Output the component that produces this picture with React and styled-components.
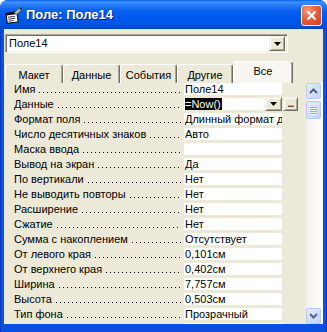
import styled, { createGlobalStyle } from "styled-components";

const GlobalStyle = createGlobalStyle`
  body {
    margin: 0;
    background: #ffffff;
    font-family: "Liberation Sans", Arial, sans-serif;
  }
`;

const Window = styled.div`
  width: 327px;
  height: 332px;
  box-sizing: border-box;
  display: flex;
  flex-direction: column;
  background: linear-gradient(to right, #0019a8 0, #0855dd 1px, #0a4fe0 3px, #0a4fe0 323px, #0855dd 326px, #0019a8 327px);
  border-radius: 8px 8px 0 0;
  overflow: hidden;
`;

const TitleBar = styled.div`
  height: 29px;
  flex-shrink: 0;
  display: flex;
  align-items: center;
  padding: 0 5px 0 5px;
  background: linear-gradient(
    to bottom,
    #0a5ded 0,
    #3d93ff 2px,
    #2a7cf8 5px,
    #0c63f0 10px,
    #0058ee 16px,
    #0055e5 24px,
    #0047cf 28px,
    #003dc0 29px
  );
  color: #fff;
`;

const TitleIcon = styled.svg`
  width: 17px;
  height: 17px;
  margin-top: 1px;
  flex-shrink: 0;
`;

const TitleText = styled.div`
  margin-left: 4px;
  font-size: 13px;
  font-weight: bold;
  text-shadow: 1px 1px 0 #0a1e8c;
  flex: 1;
`;

const CloseButton = styled.div`
  width: 21px;
  height: 21px;
  box-sizing: border-box;
  border: 1px solid #fff;
  border-radius: 3px;
  background: radial-gradient(circle at 30% 25%, #f49b7f 0, #e5603d 45%, #cf3a17 100%);
  display: flex;
  align-items: center;
  justify-content: center;
  margin-top: 2px;
`;

const Client = styled.div`
  flex: 1;
  margin: 0 4px 8px 4px;
  background: #ece9d8;
  display: flex;
  flex-direction: column;
  padding: 5px 0 0 1px;
  overflow: hidden;
  font-size: 11px;
  color: #000;
`;

const Combo = styled.div`
  width: 283px;
  height: 19px;
  box-sizing: border-box;
  display: flex;
  align-items: center;
  background: #fff;
  border: 1px solid;
  border-color: #aca899 #ffffff #ffffff #aca899;
  box-shadow: inset 1px 1px 0 #716f64, inset -1px -1px 0 #f1efe2;
  padding: 0 2px 0 3px;
`;

const ComboText = styled.div`
  flex: 1;
  line-height: 15px;
`;

const ClassicButton = styled.div`
  width: ${(p) => p.$w || 16}px;
  height: ${(p) => p.$h || 15}px;
  margin-left: ${(p) => p.$gap || 0}px;
  box-sizing: border-box;
  background: #ece9d8;
  border: 1px solid;
  border-color: #f1efe2 #716f64 #716f64 #f1efe2;
  box-shadow: inset 1px 1px 0 #ffffff, inset -1px -1px 0 #aca899;
  display: flex;
  align-items: center;
  justify-content: center;
  flex-shrink: 0;
`;

const Ellipsis = styled.span`
  font-weight: bold;
  font-size: 9px;
  line-height: 6px;
  letter-spacing: -0.5px;
`;

const TabRow = styled.div`
  display: flex;
  align-items: flex-end;
  height: 22px;
  margin-top: 8px;
  flex-shrink: 0;
`;

const Tab = styled.div`
  width: ${(p) => p.$w}px;
  height: ${(p) => (p.$active ? 22 : 19)}px;
  box-sizing: border-box;
  background: ${(p) => (p.$active ? "#f7f6f1" : "#ece9d8")};
  border-top: 1px solid #fff;
  border-left: 1px solid #fff;
  border-right: 1px solid #716f64;
  box-shadow: inset -1px 0 0 #aca899;
  border-radius: 3px 3px 0 0;
  display: flex;
  justify-content: center;
  padding-top: ${(p) => (p.$active ? 3 : 4)}px;
`;

const Sheet = styled.div`
  flex: 1;
  display: flex;
  overflow: hidden;
`;

const List = styled.div`
  width: 298px;
  display: flex;
  flex-direction: column;
  overflow: hidden;
`;

const Row = styled.div`
  height: 15px;
  flex-shrink: 0;
  display: flex;
  align-items: flex-start;
`;

const Label = styled.div`
  width: 169px;
  margin-left: 9px;
  height: 12px;
  line-height: 12px;
  display: flex;
  white-space: nowrap;
`;

const Leader = styled.span`
  flex: 1;
  margin: 0 2px 0 4px;
  background-image: linear-gradient(to right, #000 1px, transparent 1px);
  background-size: 4px 1px;
  background-repeat: repeat-x;
  background-position: 0 9px;
`;

const Value = styled.div`
  width: ${(p) => p.$w || 98}px;
  height: 12px;
  line-height: 12px;
  margin: ${(p) => p.$top || 0}px 0 0 1px;
  padding-left: 1px;
  box-sizing: border-box;
  background: #fff;
  white-space: nowrap;
  overflow: hidden;
`;

const Selected = styled.span`
  background: #000;
  color: #fff;
  padding-right: 1px;
`;

const Editor = styled.div`
  display: flex;
  align-items: flex-start;
  margin-top: -1px;
`;

const Scrollbar = styled.div`
  width: 17px;
  margin-left: 5px;
  display: flex;
  flex-direction: column;
  background: linear-gradient(to right, #f3f1ec, #fefefb);
`;

const ScrollButton = styled.div`
  width: 15px;
  height: 16px;
  box-sizing: border-box;
  border: 1px solid #b7caf5;
  border-radius: 2px;
  background: linear-gradient(to bottom right, #e6eefc, #c2d3fc);
  display: flex;
  align-items: center;
  justify-content: center;
  flex-shrink: 0;
`;

const Thumb = styled(ScrollButton)`
  height: 18px;
  margin-top: 2px;
  flex-direction: column;
  gap: 1px;
`;

const Grip = styled.div`
  width: 7px;
  height: 1px;
  background: #8caaf0;
  box-shadow: 0 1px 0 #eef4fe;
`;

const Track = styled.div`
  flex: 1;
`;

const props = [
  ["Имя", "Поле14"],
  ["Данные", "=Now()", true],
  ["Формат поля", "Длинный формат даты"],
  ["Число десятичных знаков", "Авто"],
  ["Маска ввода", ""],
  ["Вывод на экран", "Да"],
  ["По вертикали", "Нет"],
  ["Не выводить повторы", "Нет"],
  ["Расширение", "Нет"],
  ["Сжатие", "Нет"],
  ["Сумма с накоплением", "Отсутствует"],
  ["От левого края", "0,101см"],
  ["От верхнего края", "0,402см"],
  ["Ширина", "7,757см"],
  ["Высота", "0,503см"],
  ["Тип фона", "Прозрачный"],
  ["Цвет фона", "16777215"],
];

const tabs = [
  ["Макет", 58],
  ["Данные", 57],
  ["События", 57],
  ["Другие", 56],
  ["Все", 60, true],
];

const DownTriangle = () => (
  <svg width="7" height="4" viewBox="0 0 7 4">
    <path d="M0 0h7L3.5 4z" fill="#000" />
  </svg>
);

const Chevron = ({ up }) => (
  <svg width="9" height="6" viewBox="0 0 9 6">
    <path
      d={up ? "M1 5L4.5 1.5L8 5" : "M1 1L4.5 4.5L8 1"}
      stroke="#4d6185"
      strokeWidth="2"
      fill="none"
    />
  </svg>
);

const App = () => {
  return (
    <>
      <GlobalStyle />
      <Window>
        <TitleBar>
          <TitleIcon viewBox="0 0 17 17">
            <g transform="rotate(-8 8 10)">
              <rect x="1.5" y="5.5" width="11" height="10" fill="#fff" stroke="#000" />
              <rect x="1.5" y="5.5" width="11" height="2" fill="#000" />
              <path d="M3 9.5h7M3 11.5h7M3 13.5h5" stroke="#404040" />
            </g>
            <path d="M9 6L14 1.5L16 3.5L11.5 7.5Z" fill="#c0c0c0" stroke="#505050" strokeWidth="0.8" />
            <path d="M14.5 1L16.5 0.5L16.5 3Z" fill="#202020" />
          </TitleIcon>
          <TitleText>Поле: Поле14</TitleText>
          <CloseButton>
            <svg width="11" height="11" viewBox="0 0 11 11">
              <path d="M1.5 1.5L9.5 9.5M9.5 1.5L1.5 9.5" stroke="#fff" strokeWidth="2" />
            </svg>
          </CloseButton>
        </TitleBar>
        <Client>
          <Combo>
            <ComboText>Поле14</ComboText>
            <ClassicButton $w={16} $h={15}>
              <DownTriangle />
            </ClassicButton>
          </Combo>
          <TabRow>
            {tabs.map(([name, w, active]) => (
              <Tab key={name} $w={w} $active={active}>
                {name}
              </Tab>
            ))}
          </TabRow>
          <Sheet>
            <List>
              {props.map(([label, value, editing]) => (
                <Row key={label}>
                  <Label>
                    {label}
                    <Leader />
                  </Label>
                  {editing ? (
                    <Editor>
                      <Value $w={81} $top={1}>
                        <Selected>{value}</Selected>
                      </Value>
                      <ClassicButton $w={17} $h={14}>
                        <DownTriangle />
                      </ClassicButton>
                      <ClassicButton $w={15} $h={14} $gap={1}>
                        <Ellipsis>...</Ellipsis>
                      </ClassicButton>
                    </Editor>
                  ) : (
                    <Value>{value}</Value>
                  )}
                </Row>
              ))}
            </List>
            <Scrollbar>
              <ScrollButton>
                <Chevron up />
              </ScrollButton>
              <Thumb>
                <Grip />
                <Grip />
                <Grip />
                <Grip />
              </Thumb>
              <Track />
              <ScrollButton>
                <Chevron />
              </ScrollButton>
            </Scrollbar>
          </Sheet>
        </Client>
      </Window>
    </>
  );
};

export default App;
